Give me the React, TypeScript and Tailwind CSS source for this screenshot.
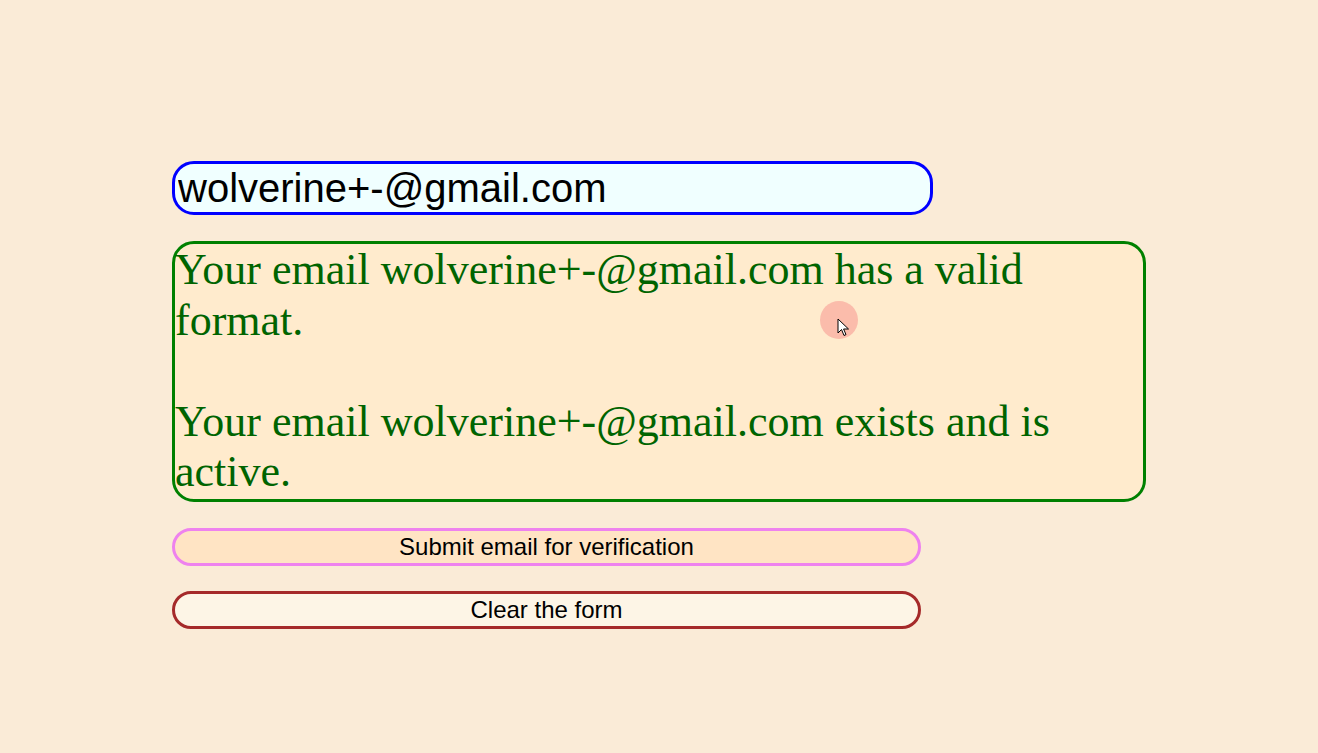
import React from 'react';

const email = 'wolverine+-@gmail.com';

export default function App() {
  return (
    <div className="min-h-[753px] w-full bg-[#faebd7] pt-[161px] pl-[172px]">
      <div className="flex flex-col items-start">
        <input
          type="text"
          defaultValue={email}
          className="h-[54px] w-[761px] rounded-[22px] border-[3px] border-[#0000ff] bg-[#f0ffff] px-[3px] font-['Liberation_Sans',Arial,sans-serif] text-[40px] leading-[46px] text-black outline-none"
        />

        {/* Verification result */}
        <div className="relative mt-[26px] w-[974px] rounded-[22px] border-[3px] border-[#008000] bg-[#ffebcd] px-0 py-[1px] font-['Liberation_Serif','Times_New_Roman',serif] text-[44px] leading-[50.6px] text-[#006400]">
          <p>Your email {email} has a valid format.</p>
          <br />
          <p>Your email {email} exists and is active.</p>

          {/* cursor highlight */}
          <div className="pointer-events-none absolute left-[645px] top-[57px] h-[38px] w-[38px] rounded-full bg-[#fbbcab]" />
          <svg
            className="pointer-events-none absolute left-[662px] top-[74px]"
            width="13"
            height="20"
            viewBox="0 0 13 20"
          >
            <path d="M1 1 L1 15 L4.5 11.5 L7 17.5 L9 16.6 L6.6 11 L11.5 11 Z" fill="#fff" stroke="#000" strokeWidth="1" strokeLinejoin="round" />
          </svg>
        </div>

        <button
          type="button"
          className="mt-[26px] h-[38px] w-[749px] rounded-full border-[3px] border-[#ee82ee] bg-[#ffe4c4] font-['Liberation_Sans',Arial,sans-serif] text-[24px] leading-[28px] text-black"
        >
          Submit email for verification
        </button>

        <button
          type="button"
          className="mt-[25px] h-[38px] w-[749px] rounded-full border-[3px] border-[#a52a2a] bg-[#fdf5e6] font-['Liberation_Sans',Arial,sans-serif] text-[24px] leading-[28px] text-black"
        >
          Clear the form
        </button>
      </div>
    </div>
  );
}
